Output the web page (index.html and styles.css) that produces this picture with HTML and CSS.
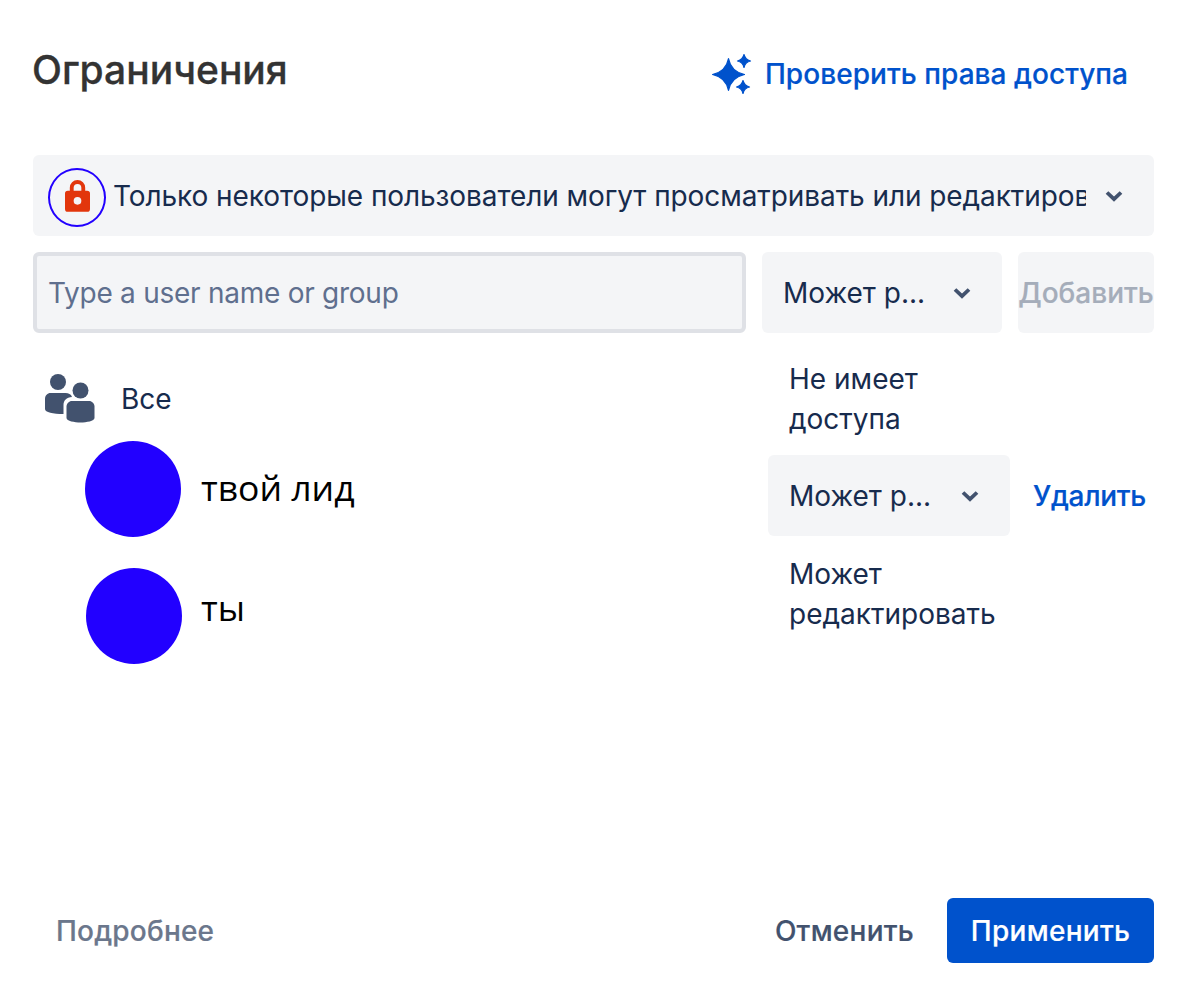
FILE: index.html
```html
<!DOCTYPE html>
<html lang="ru">
<head>
<meta charset="utf-8">
<title>Ограничения</title>
<link rel="stylesheet" href="styles.css">
</head>
<body>
<main class="dialog">
  <header class="header">
    <h1 class="title">Ограничения</h1>
    <a class="check-link">
      <svg class="sparkle" viewBox="0 0 42 42" width="42" height="42" aria-hidden="true">
        <path d="M18.500 5.500Q21 18.500 34.500 21.500 21 24.500 18.500 37.500 16 24.500 2.500 21.500 16 18.500 18.500 5.500Z"/>
        <path d="M34 1.500Q35.200 6.800 40.500 8 35.200 9.200 34 14.500 32.800 9.200 27.500 8 32.800 6.800 34 1.500Z"/>
        <path d="M33 27.500Q34.200 32.800 39.500 34 34.200 35.200 33 40.500 31.800 35.200 26.500 34 31.800 32.800 33 27.500Z"/>
      </svg>
      <span>Проверить права доступа</span>
    </a>
  </header>

  <div class="restriction">
    <span class="lock-ring">
      <svg viewBox="0 0 26 34" width="25" height="33" aria-hidden="true">
        <path fill-rule="evenodd" d="M5 12V9a8 8 0 0 1 16 0v3h2a3 3 0 0 1 3 3v16a3 3 0 0 1-3 3H3a3 3 0 0 1-3-3V15a3 3 0 0 1 3-3ZM9 12h8V9a4 4 0 0 0-8 0ZM13 18.500a4 4 0 1 0 0 8 4 4 0 0 0 0-8Z"/>
      </svg>
    </span>
    <span class="restriction-text">Только некоторые пользователи могут просматривать или редактировать</span>
    <svg class="chevron" viewBox="0 0 18 12" width="18" height="12" aria-hidden="true"><path d="M2 2.500 9 9.200l7-6.700"/></svg>
  </div>

  <div class="add-row">
    <div class="user-input">Type a user name or group</div>
    <div class="select add-select">
      <span>Может р...</span>
      <svg class="chevron" viewBox="0 0 18 12" width="18" height="12" aria-hidden="true"><path d="M2 2.500 9 9.200l7-6.700"/></svg>
    </div>
    <div class="add-button">Добавить</div>
  </div>

  <section class="list">
    <div class="people">
      <div class="everyone">
        <svg viewBox="0 0 50 50" width="50" height="50" aria-hidden="true">
          <circle cx="13" cy="9" r="8"/>
          <circle cx="35.500" cy="17.500" r="8"/>
          <path d="M5.500 20h15c3 0 5.500 1 6.500 4-5.500.5-8.500 3.500-8.500 8v9C8 41 0 39.500 0 36V26c0-3.500 2.500-6 5.500-6Z"/>
          <path d="M27 28h17c3 0 5.500 2.500 5.500 5.500V45c0 3-8 4.500-14 4.500S21.500 48 21.500 45V33.500C21.500 30.500 24 28 27 28Z"/>
        </svg>
        <span>Все</span>
      </div>
      <div class="person lead"><span class="avatar"></span><span class="person-name">твой лид</span></div>
      <div class="person you"><span class="avatar"></span><span class="person-name">ты</span></div>
    </div>
    <div class="perms">
      <div class="perm-option first">Не имеет<br>доступа</div>
      <div class="perm-row">
        <div class="select row-select">
          <span>Может р...</span>
          <svg class="chevron" viewBox="0 0 18 12" width="18" height="12" aria-hidden="true"><path d="M2 2.500 9 9.200l7-6.700"/></svg>
        </div>
        <a class="remove">Удалить</a>
      </div>
      <div class="perm-option last">Может<br>редактировать</div>
    </div>
  </section>

  <footer class="footer">
    <a class="more">Подробнее</a>
    <div class="actions">
      <a class="cancel">Отменить</a>
      <a class="apply">Применить</a>
    </div>
  </footer>
</main>
</body>
</html>
```

FILE: styles.css
```css
* { box-sizing: border-box; }
html, body { margin: 0; height: 100%; background: #fff; }
body { font-family: Inter, "Liberation Sans", sans-serif; font-size: 28px; color: #172b4d; overflow: hidden; }
.dialog { height: 986px; padding: 0 32px 23px 33px; display: flex; flex-direction: column; }
.header { height: 155px; display: flex; justify-content: space-between; align-items: flex-start; }
.title { margin: 46px 0 0 -1px; font-size: 39px; line-height: 48px; font-weight: 500; color: #333; -webkit-text-stroke: 0.300px #333; }
.check-link { margin: 52px 26px 0 0; display: flex; align-items: center; gap: 13px; color: #0052cc; font-weight: 500; line-height: 44px; letter-spacing: 0.050px; -webkit-text-stroke: 0.200px #0052cc; }
.sparkle { fill: #0052cc; stroke: #0052cc; stroke-width: 1.200; stroke-linejoin: round; display: block; margin-left: -3px; }
.restriction { height: 81px; background: #f4f5f7; border-radius: 6px; display: flex; align-items: center; padding-left: 15px; }
.lock-ring { width: 58px; height: 59px; margin-top: 4px; flex: none; border: 2px solid #2200ff; border-radius: 50%; display: flex; align-items: center; justify-content: center; }
.lock-ring svg { fill: #e2360c; display: block; margin-bottom: 5px; }
.restriction-text { width: 973px; margin-left: 7px; flex: none; white-space: nowrap; overflow: hidden; letter-spacing: -0.075px; }
.chevron { fill: none; stroke: #42526e; stroke-width: 3.800; display: block; flex: none; }
.restriction .chevron { margin-left: 19px; }
.add-row { margin-top: 16px; display: flex; gap: 16px; height: 81px; }
.user-input { width: 713px; background: #f4f5f7; border: 4px solid #dfe1e6; border-radius: 6px; padding-left: 11px; display: flex; align-items: center; color: #5f6f8e; letter-spacing: -0.260px; }
.select { background: #f4f5f7; border-radius: 6px; display: flex; align-items: center; justify-content: space-between; height: 81px; }
.add-select { width: 240px; padding: 0 31px 0 21px; }
.add-button { width: 136px; background: #f4f5f7; border-radius: 6px; display: flex; align-items: center; justify-content: center; color: #a5adba; font-weight: 500; white-space: nowrap; -webkit-text-stroke: 0.200px #a5adba; }
.list { display: flex; justify-content: space-between; }
.people { display: flex; flex-direction: column; }
.everyone { margin: 40px 0 0 12px; height: 50px; display: flex; align-items: center; gap: 26px; }
.everyone span { position: relative; top: 1px; }
.everyone svg { fill: #42526e; display: block; }
.person { display: flex; align-items: center; color: #000; }
.person.lead { margin: 18px 0 0 52px; gap: 20px; }
.person.you { margin: 31px 0 0 53px; gap: 19px; }
.avatar { width: 96px; height: 96px; border-radius: 50%; background: #2200ff; display: block; flex: none; }
.person-name { font-family: "Open Sans", Inter, sans-serif; font-size: 35.500px; line-height: 44px; position: relative; top: -2px; }
.you .person-name { top: -9px; }
.perms { width: 386px; padding-left: 22px; margin-top: 26px; }
.perm-option { line-height: 40px; margin-left: -1px; }
.perm-option.first { height: 77px; }
.perm-row { margin: 19px 0 0 -22px; display: flex; align-items: center; gap: 24px; }
.row-select { width: 242px; padding: 1px 31px 0 21px; }
.remove { color: #0052cc; font-weight: 500; letter-spacing: -0.300px; margin-left: -1px; padding-top: 1px; -webkit-text-stroke: 0.200px #0052cc; }
.perm-option.last { margin-top: 18px; }
.footer { margin-top: auto; display: flex; justify-content: space-between; align-items: center; height: 65px; }
.more { margin-left: 23px; color: #6b778c; font-weight: 500; letter-spacing: 0.200px; -webkit-text-stroke: 0.200px #6b778c; }
.actions { display: flex; align-items: center; gap: 33px; }
.cancel { color: #42526e; font-weight: 500; letter-spacing: 0.250px; -webkit-text-stroke: 0.200px #42526e; }
.apply { width: 207px; height: 65px; border-radius: 6px; background: #0052cc; color: #fff; font-weight: 500; letter-spacing: 0.300px; -webkit-text-stroke: 0.200px #fff; display: flex; align-items: center; justify-content: center; }
```
